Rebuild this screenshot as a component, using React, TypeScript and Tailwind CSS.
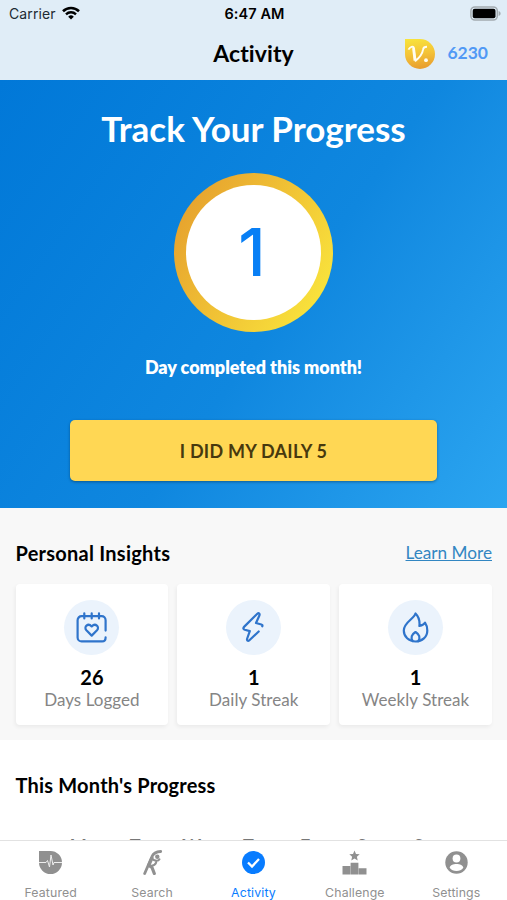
import type { ReactNode } from "react";

function StatusBar() {
  return (
    <div className="grid h-7 grid-cols-3 items-center pl-[9px] pr-[7px] font-['Inter','Liberation_Sans',sans-serif] text-black">
      <div className="flex items-center gap-[6px]">
        <span className="text-[14px] leading-7 tracking-[0.1px] text-[#202a33]">Carrier</span>
        <svg className="-mt-[3px]" width="18" height="14" viewBox="0 0 18 14" fill="none">
          <path d="M1 5.2a11.5 11.5 0 0 1 16 0" stroke="currentColor" strokeWidth="2.6" />
          <path d="M4 8.3a7.2 7.2 0 0 1 10 0" stroke="currentColor" strokeWidth="2.4" />
          <path d="M9 13.6 6.2 10.7a4 4 0 0 1 5.6 0Z" fill="currentColor" />
        </svg>
      </div>
      <span className="text-center text-[14.5px] font-semibold leading-7 tracking-[0.1px]">6:47 AM</span>
      <svg className="-mt-[2px] -mr-[1px] justify-self-end" width="31" height="15" viewBox="0 0 31 15">
        <rect x="0.9" y="0.9" width="26.4" height="13.2" rx="4" fill="none" stroke="#a2aab0" strokeWidth="1.5" />
        <rect x="2.7" y="2.7" width="22.8" height="9.6" rx="2" fill="#000" />
        <path d="M28.6 5v5c1.4-.5 2-1.3 2-2.5s-.6-2-2-2.5Z" fill="#a2aab0" />
      </svg>
    </div>
  );
}

function CoinLogo() {
  return (
    <svg className="-mt-px" width="30" height="30" viewBox="0 0 30 30">
      <defs>
        <linearGradient id="coin" x1="0" y1="0" x2="0.15" y2="1">
          <stop offset="0" stopColor="#f8e53c" />
          <stop offset="0.55" stopColor="#f4c338" />
          <stop offset="1" stopColor="#e9a02f" />
        </linearGradient>
      </defs>
      <path d="M0 0h15a15 15 0 1 1-15 15Z" fill="url(#coin)" />
      <path d="M3.4 10.6C5 7.8 8.300 6.400 9 9.400l1.600 12.400c4.400-3.600 6.900-7.500 7.500-11.400.2-1.700 1.500-2.600 3.900-2.600" fill="none" stroke="#fffdf2" strokeWidth="1.900" strokeLinejoin="round" />
      <path d="m8.300 9 1.500 12.600" fill="none" stroke="#fffdf2" strokeWidth="2.400" />
      <circle cx="21" cy="21.200" r="1.900" fill="#fffdf2" />
    </svg>
  );
}

function CalendarIcon() {
  return (
    <>
      <path d="M29.6 18.600V8.200a4 4 0 0 0-4-4H5.600a4 4 0 0 0-4 4v17.200a4 4 0 0 0 4 4h20.500c2.200 0 3.500-1 3.500-4" />
      <path d="M8.300 1.300v5.200M15.700 1.300v5.200M23 1.300v5.200" />
      <path d="m15.700 23.600-5.300-5.300c-3-3.300 1.500-7.800 5.300-3.900 3.800-3.900 8.300.6 5.300 3.900Z" />
    </>
  );
}

function BoltIcon() {
  return (
    <path d="M24.300 14.300c.4-.9 0-1.500-1-1.800L18 11l3.300-7.300c.9-2-.5-3.200-2-1.900L6.300 14.600c-1.500 1.500-1.100 2.600.5 3.100l5 1.400-2.600 7.400c-.7 2 .7 3.100 2.200 1.700l9.300-8.700" />
  );
}

function FlameIcon() {
  return (
    <>
      <path d="M15.500 1.500C14.500 6.500 3.800 10.200 3.800 18.400c0 6.300 5 11.100 11.700 11.100s11.800-4.600 11.800-11.100c0-2.900-.7-5.400-2.300-7.700-1 1.900-3.300 2.700-5.600 3.200.6-5.400-.9-9.400-3.900-12.400Z" />
      <path d="M12.700 29c-2.400-3.600-1-6.600 2.800-9 3.800 2.400 5.200 5.400 2.800 9" />
    </>
  );
}

type InsightProps = { icon: ReactNode; value: number; label: string };

function InsightCard({ icon, value, label }: InsightProps) {
  return (
    <div className="flex h-[141px] flex-1 flex-col items-center rounded-[4px] bg-white pt-4 shadow-[-1px_2px_4px_rgba(0,0,0,0.06)]">
      <div className="flex size-[55px] items-center justify-center rounded-full bg-[#ebf3fc]">
        <svg width="31" height="31" viewBox="0 0 31 31" fill="none" stroke="#2f74cb" strokeWidth="2.200" strokeLinecap="round" strokeLinejoin="round">
          {icon}
        </svg>
      </div>
      <span className="mt-[10px] text-[20px] font-bold leading-6 text-black">{value}</span>
      <span className="whitespace-nowrap text-[17px] leading-[21px] tracking-[0.050px] text-[#858585]">{label}</span>
    </div>
  );
}

function FeaturedIcon() {
  return (
    <>
      <path d="M1 1h11.500A11.500 11.500 0 1 1 1 12.500Z" fill="currentColor" />
      <path d="M1 12.500h7l1.500-2 2 6.500 1.500-12 2 10 1-2.500h8" stroke="#eee" strokeWidth="1" fill="none" strokeLinejoin="round" />
    </>
  );
}

function StretchIcon() {
  return (
    <g fill="none" stroke="currentColor" strokeLinecap="round" strokeLinejoin="round">
      <path d="M20.700 1.500c-4.700.2-7.500 2-8.700 5L4.700 23.500" strokeWidth="2.800" />
      <path d="m12 8-3.300 7.500 3.300 2 2.300 6" strokeWidth="3.200" />
      <path d="m13 9.500 1.500.8c2.200.8 4 .6 5-1M10 15.500c3 .7 5-.5 6.200-3" strokeWidth="2" />
      <circle cx="17.300" cy="6.700" r="2.200" fill="currentColor" stroke="none" />
    </g>
  );
}

function ActivityIcon() {
  return (
    <>
      <circle cx="12.500" cy="12.500" r="11.500" fill="currentColor" />
      <path d="m7 12.500 4 4 7-7.500" fill="none" stroke="white" strokeWidth="2.300" />
    </>
  );
}

function ChallengeIcon() {
  return (
    <g fill="currentColor">
      <path d="m12.500.5 1.500 3.400 3.700.4-2.800 2.500.8 3.600-3.200-1.800-3.200 1.800.8-3.600-2.800-2.500 3.700-.4Z" />
      <path d="M.5 16h7.800v8.500H.5ZM8.600 12.700h7.800v11.800H8.600ZM16.700 18.200h7.800v6.300h-7.800Z" />
    </g>
  );
}

function SettingsIcon() {
  return (
    <>
      <circle cx="12.500" cy="12.500" r="11.200" fill="currentColor" />
      <circle cx="12.500" cy="8.500" r="3.900" fill="white" />
      <path d="M5.700 17.700c0-2.300 3.500-3.700 6.800-3.700s6.800 1.400 6.800 3.700c-1.500 2.300-4 3.300-6.800 3.300s-5.300-1-6.800-3.300Z" fill="white" />
    </>
  );
}

const tabs: { label: string; icon: ReactNode; active?: boolean }[] = [
  { label: "Featured", icon: <FeaturedIcon /> },
  { label: "Search", icon: <StretchIcon /> },
  { label: "Activity", icon: <ActivityIcon />, active: true },
  { label: "Challenge", icon: <ChallengeIcon /> },
  { label: "Settings", icon: <SettingsIcon /> },
];

const days = ["M", "T", "W", "T", "F", "S", "S"];

export default function App() {
  return (
    <div className="flex h-[900px] w-[507px] flex-col overflow-hidden bg-white font-['Lato',sans-serif]">
      <header className="h-20 shrink-0 bg-[#e0edf7]">
        <StatusBar />
        <div className="grid h-[52px] grid-cols-[1fr_auto_1fr] items-center px-[19px]">
          <h1 className="col-start-2 -mt-[2px] text-[23px] font-bold leading-[50px] tracking-[0.1px] text-black">Activity</h1>
          <div className="flex items-center gap-[12px] justify-self-end">
            <CoinLogo />
            <span className="-mt-[2px] text-[17.500px] font-bold text-[#5199f5]">6230</span>
          </div>
        </div>
      </header>

      <section className="flex h-[428px] shrink-0 flex-col items-center bg-linear-125 from-[#0178d8] via-[#0f87df] via-55% to-[#2ba5f0] pt-[26px]">
        <h2 className="text-[35px] font-bold leading-[44px] text-white">Track Your Progress</h2>
        <div className="mt-[23px] flex size-[159px] items-center justify-center rounded-full bg-linear-120 from-[#e6a22e] from-10% to-[#f9e43c] to-90%">
          <div className="flex size-[135px] items-center justify-center rounded-full bg-white pr-[3px] font-['Inter',sans-serif] text-[66px] font-medium text-[#087ff5]">1</div>
        </div>
        <p className="mt-[23px] text-[18px] font-extrabold leading-6 tracking-[-0.050px] text-white">Day completed this month!</p>
        <button className="mt-[41px] h-[61px] w-[367px] rounded-[5px] bg-[#ffd754] pt-px text-[18px] font-bold tracking-[0.250px] text-[#47390e] shadow-[0_1px_3px_rgba(0,0,0,0.35)]">I DID MY DAILY 5</button>
      </section>

      <section className="h-[232px] shrink-0 bg-[#f8f8f8] pl-[15.500px] pr-[15px] pt-8">
        <div className="flex items-center justify-between">
          <h3 className="text-[20px] font-bold leading-[26px] tracking-[0.250px] text-black">Personal Insights</h3>
          <a className="text-[17.200px] leading-[26px] text-[#3286c2] underline underline-offset-1">Learn More</a>
        </div>
        <div className="mt-[18px] flex gap-[9px]">
          <InsightCard icon={<CalendarIcon />} value={26} label="Days Logged" />
          <InsightCard icon={<BoltIcon />} value={1} label="Daily Streak" />
          <InsightCard icon={<FlameIcon />} value={1} label="Weekly Streak" />
        </div>
      </section>

      <section className="h-[100px] shrink-0 overflow-hidden pt-8">
        <h3 className="px-[15.500px] text-[20px] font-bold leading-[26px] tracking-[0.200px] text-black">This Month's Progress</h3>
        <div className="mt-[36px] grid grid-cols-7 pl-[50px] pr-[60px] text-center text-[18px] font-bold leading-6 text-[#777]">
          {days.map((day, i) => (
            <span key={i}>{day}</span>
          ))}
        </div>
      </section>

      <nav className="grid h-[60px] shrink-0 grid-cols-5 border-t border-[#e2e2e2] bg-white font-['Inter','Liberation_Sans',sans-serif]">
        {tabs.map(({ label, icon, active }) => (
          <div key={label} className={active ? "flex flex-col items-center pt-[9px] text-[#087cff]" : "flex flex-col items-center pt-[9px] text-[#909090]"}>
            <svg width="25" height="25" viewBox="0 0 25 25">{icon}</svg>
            <span className="mt-[10px] text-[12.300px] leading-4 tracking-[0.150px]">{label}</span>
          </div>
        ))}
      </nav>
    </div>
  );
}
